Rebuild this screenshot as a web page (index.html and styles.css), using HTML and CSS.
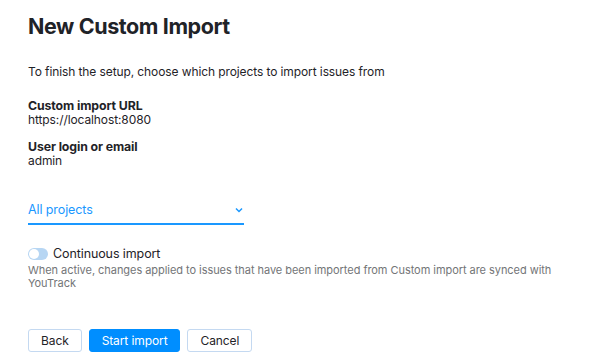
FILE: index.html
```html
<!DOCTYPE html>
<html lang="en">
<head>
    <meta charset="UTF-8">
    <meta name="viewport" content="width=device-width, initial-scale=1.0">
    <title>New Custom Import</title>
    <link rel="stylesheet" href="styles.css">
</head>
<body>

    <!-- Page Title -->
    <h1 class="title">New Custom Import</h1>

    <p class="intro">To finish the setup, choose which projects to import issues from</p>

    <!-- Connection Details -->
    <div class="field">
        <div class="field-label">Custom import URL</div>
        <div class="field-value">https://localhost:8080</div>
    </div>

    <div class="field">
        <div class="field-label">User login or email</div>
        <div class="field-value">admin</div>
    </div>

    <!-- Project Selector -->
    <button class="select" type="button">
        <span>All projects</span>
        <svg class="chevron" width="8" height="6" viewBox="0 0 8 6">
            <path d="M1 1.5 L4 4.5 L7 1.5" fill="none" stroke="currentColor" stroke-width="1.5"/>
        </svg>
    </button>

    <!-- Continuous Import -->
    <div class="toggle-row">
        <span class="toggle"><span class="knob"></span></span>
        <span class="toggle-label">Continuous import</span>
    </div>
    <p class="hint">When active, changes applied to issues that have been imported from Custom import are synced with YouTrack</p>

    <!-- Actions -->
    <div class="actions">
        <button class="btn" type="button">Back</button>
        <button class="btn btn-primary" type="button">Start import</button>
        <button class="btn" type="button">Cancel</button>
    </div>

</body>
</html>
```

FILE: styles.css
```css
/* Basic Reset */
* {
    margin: 0;
    padding: 0;
    box-sizing: border-box;
}

body {
    font-family: Inter, 'Noto Sans', sans-serif;
    background-color: #fff;
    color: #1f2328;
    padding: 12px 28px 0;
    font-size: 12px;
    letter-spacing: -0.1px;
}

/* Header */
.title {
    font-size: 21.5px;
    font-weight: 700;
    line-height: 28px;
    letter-spacing: -0.4px;
}

.intro {
    margin-top: 24px;
    line-height: 16px;
}

/* Fields */
.field {
    margin-top: 19px;
    line-height: 14px;
}

.field + .field {
    margin-top: 13px;
}

.field-label {
    font-weight: 650;
    font-size: 12.3px;
}

/* Select */
.select {
    display: flex;
    align-items: center;
    justify-content: space-between;
    width: 216px;
    margin-top: 34px;
    padding: 0 0 5px;
    background: none;
    border: none;
    border-bottom: 2px solid #1a98ff;
    color: #1a98ff;
    font-family: inherit;
    font-size: 12.5px;
    letter-spacing: -0.1px;
    line-height: 16px;
    cursor: pointer;
}

.chevron {
    margin-right: 1px;
}

/* Toggle */
.toggle-row {
    display: flex;
    align-items: center;
    gap: 5px;
    margin-top: 21px;
}

.toggle {
    display: flex;
    align-items: center;
    width: 20px;
    height: 12px;
    border-radius: 6px;
    background-color: #b7d6f3;
    padding: 1px;
}

.knob {
    width: 10px;
    height: 10px;
    border-radius: 50%;
    background-color: #fff;
}

.toggle-label {
    line-height: 16px;
    font-size: 12.5px;
}

.hint {
    margin-top: 2px;
    font-size: 11px;
    letter-spacing: -0.05px;
    line-height: 13px;
    color: #737577;
    width: 545px;
}

/* Buttons */
.actions {
    display: flex;
    gap: 7px;
    margin-top: 39px;
}

.btn {
    height: 23px;
    padding: 0 12px;
    font-family: inherit;
    font-size: 12px;
    letter-spacing: -0.1px;
    color: #1f2328;
    background-color: #fff;
    border: 1px solid #c4d9f1;
    border-radius: 3px;
    cursor: pointer;
}

.btn-primary {
    background-color: #008eff;
    border-color: #008eff;
    color: #fff;
}
```
